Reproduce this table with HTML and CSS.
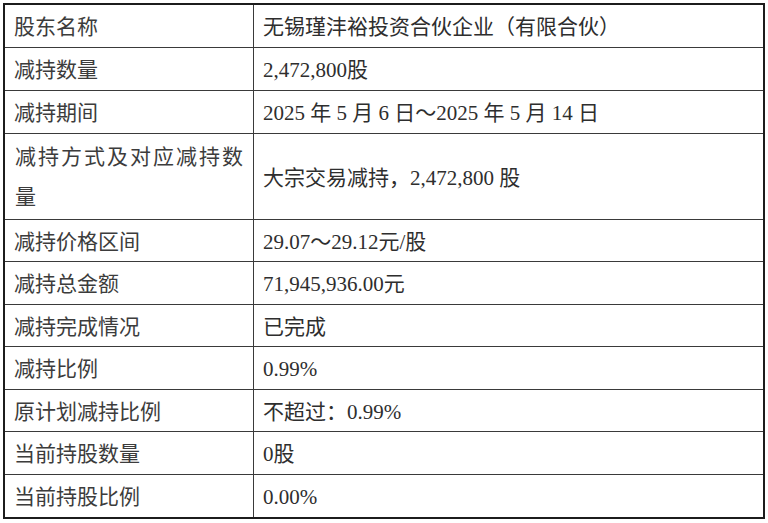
FILE: index.html
```html
<!DOCTYPE html>
<html lang="zh-CN">
<head>
<meta charset="utf-8">
<title>减持情况</title>
<link rel="stylesheet" href="styles.css">
</head>
<body>
<div class="sheet">
  <div class="cell label">股东名称</div>
  <div class="cell value">无锡瑾沣裕投资合伙企业（有限合伙）</div>
  <div class="cell label">减持数量</div>
  <div class="cell value">2,472,800股</div>
  <div class="cell label">减持期间</div>
  <div class="cell value">2025 年 5 月 6 日～2025 年 5 月 14 日</div>
  <div class="cell label wrap">减持方式及对应减持数量</div>
  <div class="cell value">大宗交易减持，2,472,800 股</div>
  <div class="cell label">减持价格区间</div>
  <div class="cell value">29.07～29.12元/股</div>
  <div class="cell label">减持总金额</div>
  <div class="cell value">71,945,936.00元</div>
  <div class="cell label">减持完成情况</div>
  <div class="cell value">已完成</div>
  <div class="cell label">减持比例</div>
  <div class="cell value">0.99%</div>
  <div class="cell label">原计划减持比例</div>
  <div class="cell value">不超过：0.99%</div>
  <div class="cell label">当前持股数量</div>
  <div class="cell value">0股</div>
  <div class="cell label">当前持股比例</div>
  <div class="cell value">0.00%</div>
</div>
</body>
</html>
```

FILE: styles.css
```css
html, body {
  margin: 0;
  padding: 0;
  background: #ffffff;
}

body {
  padding: 3px 0 0 3px;
  font-family: "Liberation Serif", "Noto Sans CJK SC", serif;
  font-size: 21px;
  color: #333333;
}

.sheet {
  width: 758px;
  display: grid;
  grid-template-columns: 248px 509px;
  grid-template-rows: 42px 42px 42px 85px 41px 42px 41px 42px 41px 42px 42px;
  gap: 1px;
  background: #3a3a3a;
  border: 2px solid #1c1c1c;
}

.cell {
  background: #ffffff;
  display: flex;
  align-items: center;
  padding: 2px 10px 0 9px;
  line-height: 40px;
  white-space: nowrap;
}

.label {
  color: #3c3c3c;
}

.value {
  color: #2e2e2e;
}

.wrap {
  display: block;
  white-space: normal;
  text-align: justify;
  padding: 3px 10px 0 10px;
}
```
